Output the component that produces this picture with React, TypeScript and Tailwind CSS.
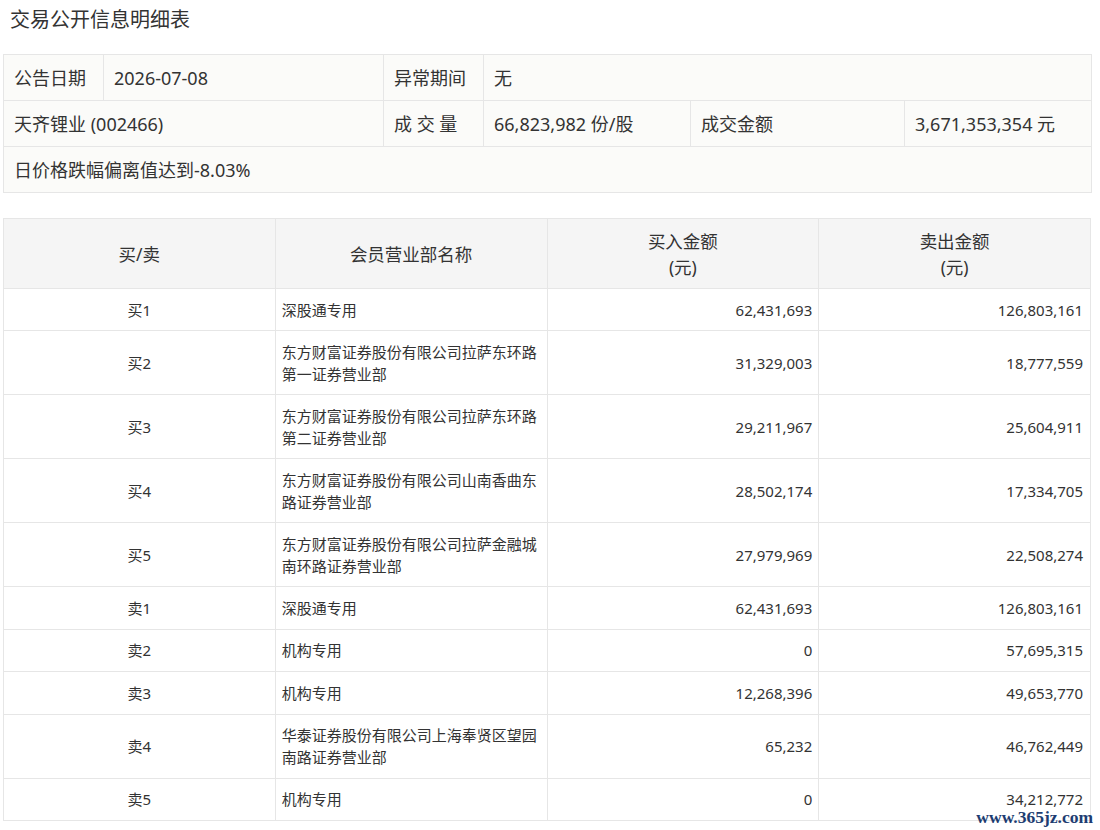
import React from "react";

type Row = { side: string; name: string[]; buy: string; sell: string };

const rows: Row[] = [
  { side: "买1", name: ["深股通专用"], buy: "62,431,693", sell: "126,803,161" },
  { side: "买2", name: ["东方财富证券股份有限公司拉萨东环路", "第一证券营业部"], buy: "31,329,003", sell: "18,777,559" },
  { side: "买3", name: ["东方财富证券股份有限公司拉萨东环路", "第二证券营业部"], buy: "29,211,967", sell: "25,604,911" },
  { side: "买4", name: ["东方财富证券股份有限公司山南香曲东", "路证券营业部"], buy: "28,502,174", sell: "17,334,705" },
  { side: "买5", name: ["东方财富证券股份有限公司拉萨金融城", "南环路证券营业部"], buy: "27,979,969", sell: "22,508,274" },
  { side: "卖1", name: ["深股通专用"], buy: "62,431,693", sell: "126,803,161" },
  { side: "卖2", name: ["机构专用"], buy: "0", sell: "57,695,315" },
  { side: "卖3", name: ["机构专用"], buy: "12,268,396", sell: "49,653,770" },
  { side: "卖4", name: ["华泰证券股份有限公司上海奉贤区望园", "南路证券营业部"], buy: "65,232", sell: "46,762,449" },
  { side: "卖5", name: ["机构专用"], buy: "0", sell: "34,212,772" },
];

const info = "h-[46px] border border-[#e6e6e6] px-[10px] align-middle";
const cell = "border border-[#e6e6e6] p-0 align-middle";

export default function App() {
  return (
    <div
      className="relative h-[830px] bg-white px-[3px] text-[#333]"
      style={{ fontFamily: '"Noto Sans", "Noto Sans CJK SC", sans-serif' }}
    >
      <h1 className="pl-[7px] pt-[6px] text-[20px] leading-[28px] font-normal">交易公开信息明细表</h1>

      {/* summary block */}
      <table className="mt-[20px] w-[1088px] table-fixed border-collapse bg-[#fbfbf9] text-[18px] leading-[24px]">
        <colgroup>
          <col className="w-[100px]" />
          <col className="w-[280px]" />
          <col className="w-[100px]" />
          <col className="w-[207px]" />
          <col className="w-[214px]" />
          <col className="w-[187px]" />
        </colgroup>
        <tbody>
          <tr>
            <td className={info}>公告日期</td>
            <td className={info}>2026-07-08</td>
            <td className={info}>异常期间</td>
            <td className={info} colSpan={3}>无</td>
          </tr>
          <tr>
            <td className={info} colSpan={2}>天齐锂业 (002466)</td>
            <td className={info}>成 交 量</td>
            <td className={info}>66,823,982 份/股</td>
            <td className={info}>成交金额</td>
            <td className={info}>3,671,353,354 元</td>
          </tr>
          <tr>
            <td className={info} colSpan={6}>日价格跌幅偏离值达到-8.03%</td>
          </tr>
        </tbody>
      </table>

      {/* detail table */}
      <table className="mt-[25px] w-[1088px] table-fixed border-collapse text-[15px] leading-[22px]">
        <thead>
          <tr className="h-[70px] bg-[#f5f5f5] text-[17.5px] leading-[26px]">
            <th className="border border-[#e6e6e6] font-normal">买/卖</th>
            <th className="border border-[#e6e6e6] font-normal">会员营业部名称</th>
            <th className="border border-[#e6e6e6] font-normal">买入金额<br />(元)</th>
            <th className="border border-[#e6e6e6] font-normal">卖出金额<br />(元)</th>
          </tr>
        </thead>
        <tbody>
          {rows.map((r) => (
            <tr key={r.side} className={r.name.length > 1 ? "h-[64px]" : "h-[42.4px]"}>
              <td className={`${cell} text-center`}>{r.side}</td>
              <td className={`${cell} px-[6px]`}>
                {r.name.map((n) => (
                  <div key={n}>{n}</div>
                ))}
              </td>
              <td className={`${cell} pr-[6px] text-right`}>{r.buy}</td>
              <td className={`${cell} pr-[7px] text-right`}>{r.sell}</td>
            </tr>
          ))}
        </tbody>
      </table>

      <div
        className="absolute right-[7px] top-[810px] text-[17.5px] font-bold leading-[14px] text-[#1d3d72]"
        style={{ fontFamily: '"Liberation Serif", serif' }}
      >
        www.365jz.com
      </div>
    </div>
  );
}
